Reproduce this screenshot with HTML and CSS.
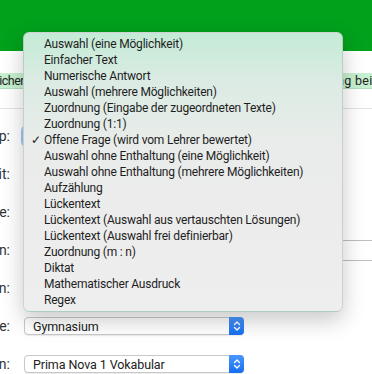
FILE: index.html
```
<!DOCTYPE html>
<html lang="de">
<head>
    <meta charset="utf-8">
    <link rel="stylesheet" href="styles.css">
</head>
<body>
<div class="header"></div>
<div class="content">
    <div class="band">
        <span class="band-left"><span>Öffentlicher</span></span>
        <span class="band-right">Bewertung bei Abgabe</span>
    </div>
    <div class="rule"></div>
    <form class="form">
        <div class="row">
            <label class="label"><span>Fragetyp:</span></label>
            <div class="select focus"><span class="value">Offene Frage (wird vom Lehrer bewertet)</span><span class="cap"></span></div>
        </div>
        <div class="row">
            <label class="label"><span>Zeit:</span></label>
        </div>
        <div class="row">
            <label class="label"><span>Schwierigkeitsstufe:</span></label>
        </div>
        <div class="row">
            <label class="label"><span>Themen:</span></label>
            <input class="input" type="text">
        </div>
        <div class="row">
            <label class="label"><span>Optionen:</span></label>
        </div>
        <div class="row">
            <label class="label"><span>Schulstufe:</span></label>
            <div class="select"><span class="value">Gymnasium</span><span class="cap"><svg width="8" height="12" viewBox="0 0 8 12"><path d="M1.5 4.5 4 2l2.5 2.5M1.5 7.5 4 10l2.5-2.5" fill="none" stroke="#fff" stroke-width="1.4" stroke-linecap="round" stroke-linejoin="round"/></svg></span></div>
        </div>
        <div class="row">
            <label class="label"><span>Lektion:</span></label>
            <div class="select"><span class="value">Prima Nova 1 Vokabular</span><span class="cap"><svg width="8" height="12" viewBox="0 0 8 12"><path d="M1.5 4.5 4 2l2.5 2.5M1.5 7.5 4 10l2.5-2.5" fill="none" stroke="#fff" stroke-width="1.4" stroke-linecap="round" stroke-linejoin="round"/></svg></span></div>
        </div>
    </form>
</div>

<!-- geöffnetes Auswahlmenü des Fragetyps -->
<ul class="menu">
    <li>Auswahl (eine Möglichkeit)</li>
    <li>Einfacher Text</li>
    <li>Numerische Antwort</li>
    <li>Auswahl (mehrere Möglichkeiten)</li>
    <li>Zuordnung (Eingabe der zugeordneten Texte)</li>
    <li>Zuordnung (1:1)</li>
    <li class="checked">Offene Frage (wird vom Lehrer bewertet)</li>
    <li>Auswahl ohne Enthaltung (eine Möglichkeit)</li>
    <li>Auswahl ohne Enthaltung (mehrere Möglichkeiten)</li>
    <li>Aufzählung</li>
    <li>Lückentext</li>
    <li>Lückentext (Auswahl aus vertauschten Lösungen)</li>
    <li>Lückentext (Auswahl frei definierbar)</li>
    <li>Zuordnung (m : n)</li>
    <li>Diktat</li>
    <li>Mathematischer Ausdruck</li>
    <li>Regex</li>
</ul>
</body>
</html>
```

FILE: styles.css
```
* {
    margin: 0;
    padding: 0;
    box-sizing: border-box;
}
ul {
    list-style: none;
}
body {
    font-family: Roboto, "Liberation Sans", Arial, sans-serif;
    color: #222;
    background-color: #fff;
    overflow: hidden;
}
.header {
    height: 51px;
    background-color: #01a11c;
}
.content {
    padding-top: 22px;
    overflow: hidden;
}
.band {
    display: flex;
    height: 16px;
    background-color: #c6f1d0;
    border-bottom: 1px solid #b4dcbf;
    font-size: 12.5px;
    letter-spacing: -0.2px;
    line-height: 15px;
    white-space: nowrap;
}
.band-left {
    width: 24px;
    flex: none;
    overflow: hidden;
    display: flex;
    justify-content: flex-end;
}
.band-left span {
    flex: none;
    letter-spacing: -0.5px;
}
.band-right {
    margin-left: 319px;
    text-indent: -54px;
    letter-spacing: 0.3px;
    overflow: hidden;
}
.rule {
    margin-top: 19px;
    height: 1px;
    background-color: #e2e2e2;
}
.form {
    padding-top: 8px;
}
.row {
    display: flex;
    align-items: center;
    gap: 14px;
    height: 38px;
}
.label {
    width: 10px;
    flex: none;
    display: flex;
    justify-content: flex-end;
    overflow: hidden;
    font-size: 14px;
    color: #333;
    white-space: nowrap;
}
.label span {
    flex: none;
}
.select {
    display: flex;
    align-items: center;
    width: 220px;
    height: 18px;
    background-color: #fff;
    border: 1px solid #c8c8c8;
    border-radius: 4px;
    box-shadow: 0 1px 1px rgba(0,0,0,.08);
    font-size: 12.5px;
    letter-spacing: -0.1px;
}
.select .value {
    flex: 1;
    padding-left: 8px;
    white-space: nowrap;
    overflow: hidden;
}
.select .cap {
    width: 15px;
    height: 18px;
    margin: -1px -1px -1px 0;
    display: flex;
    align-items: center;
    justify-content: center;
    background: linear-gradient(#4a97fb, #166ff0);
    border-radius: 0 4px 4px 0;
}
.select.focus {
    box-shadow: 0 0 0 3px rgba(76,150,250,.55);
}
.input {
    width: 400px;
    height: 21px;
    border: 1px solid #bdbdbd;
    flex: none;
}
.menu {
    position: absolute;
    left: 23px;
    top: 32px;
    width: 320px;
    height: 280px;
    padding: 3px 0 5px;
    border-radius: 6px;
    border: 1px solid rgba(0,0,0,.12);
    background: linear-gradient(#c4ebd6 0, #dcebe4 50px, #e9ecea 110px, #ececec 180px, #eeeeee);
    box-shadow: 0 8px 22px rgba(0,0,0,.22);
    font-size: 12px;
    letter-spacing: -0.2px;
    line-height: 16px;
    color: #1e1e1e;
}
.menu li {
    padding-left: 20px;
    white-space: nowrap;
    position: relative;
}
.menu li.checked::before {
    content: "✓";
    position: absolute;
    left: 7px;
    top: 0;
}
```
